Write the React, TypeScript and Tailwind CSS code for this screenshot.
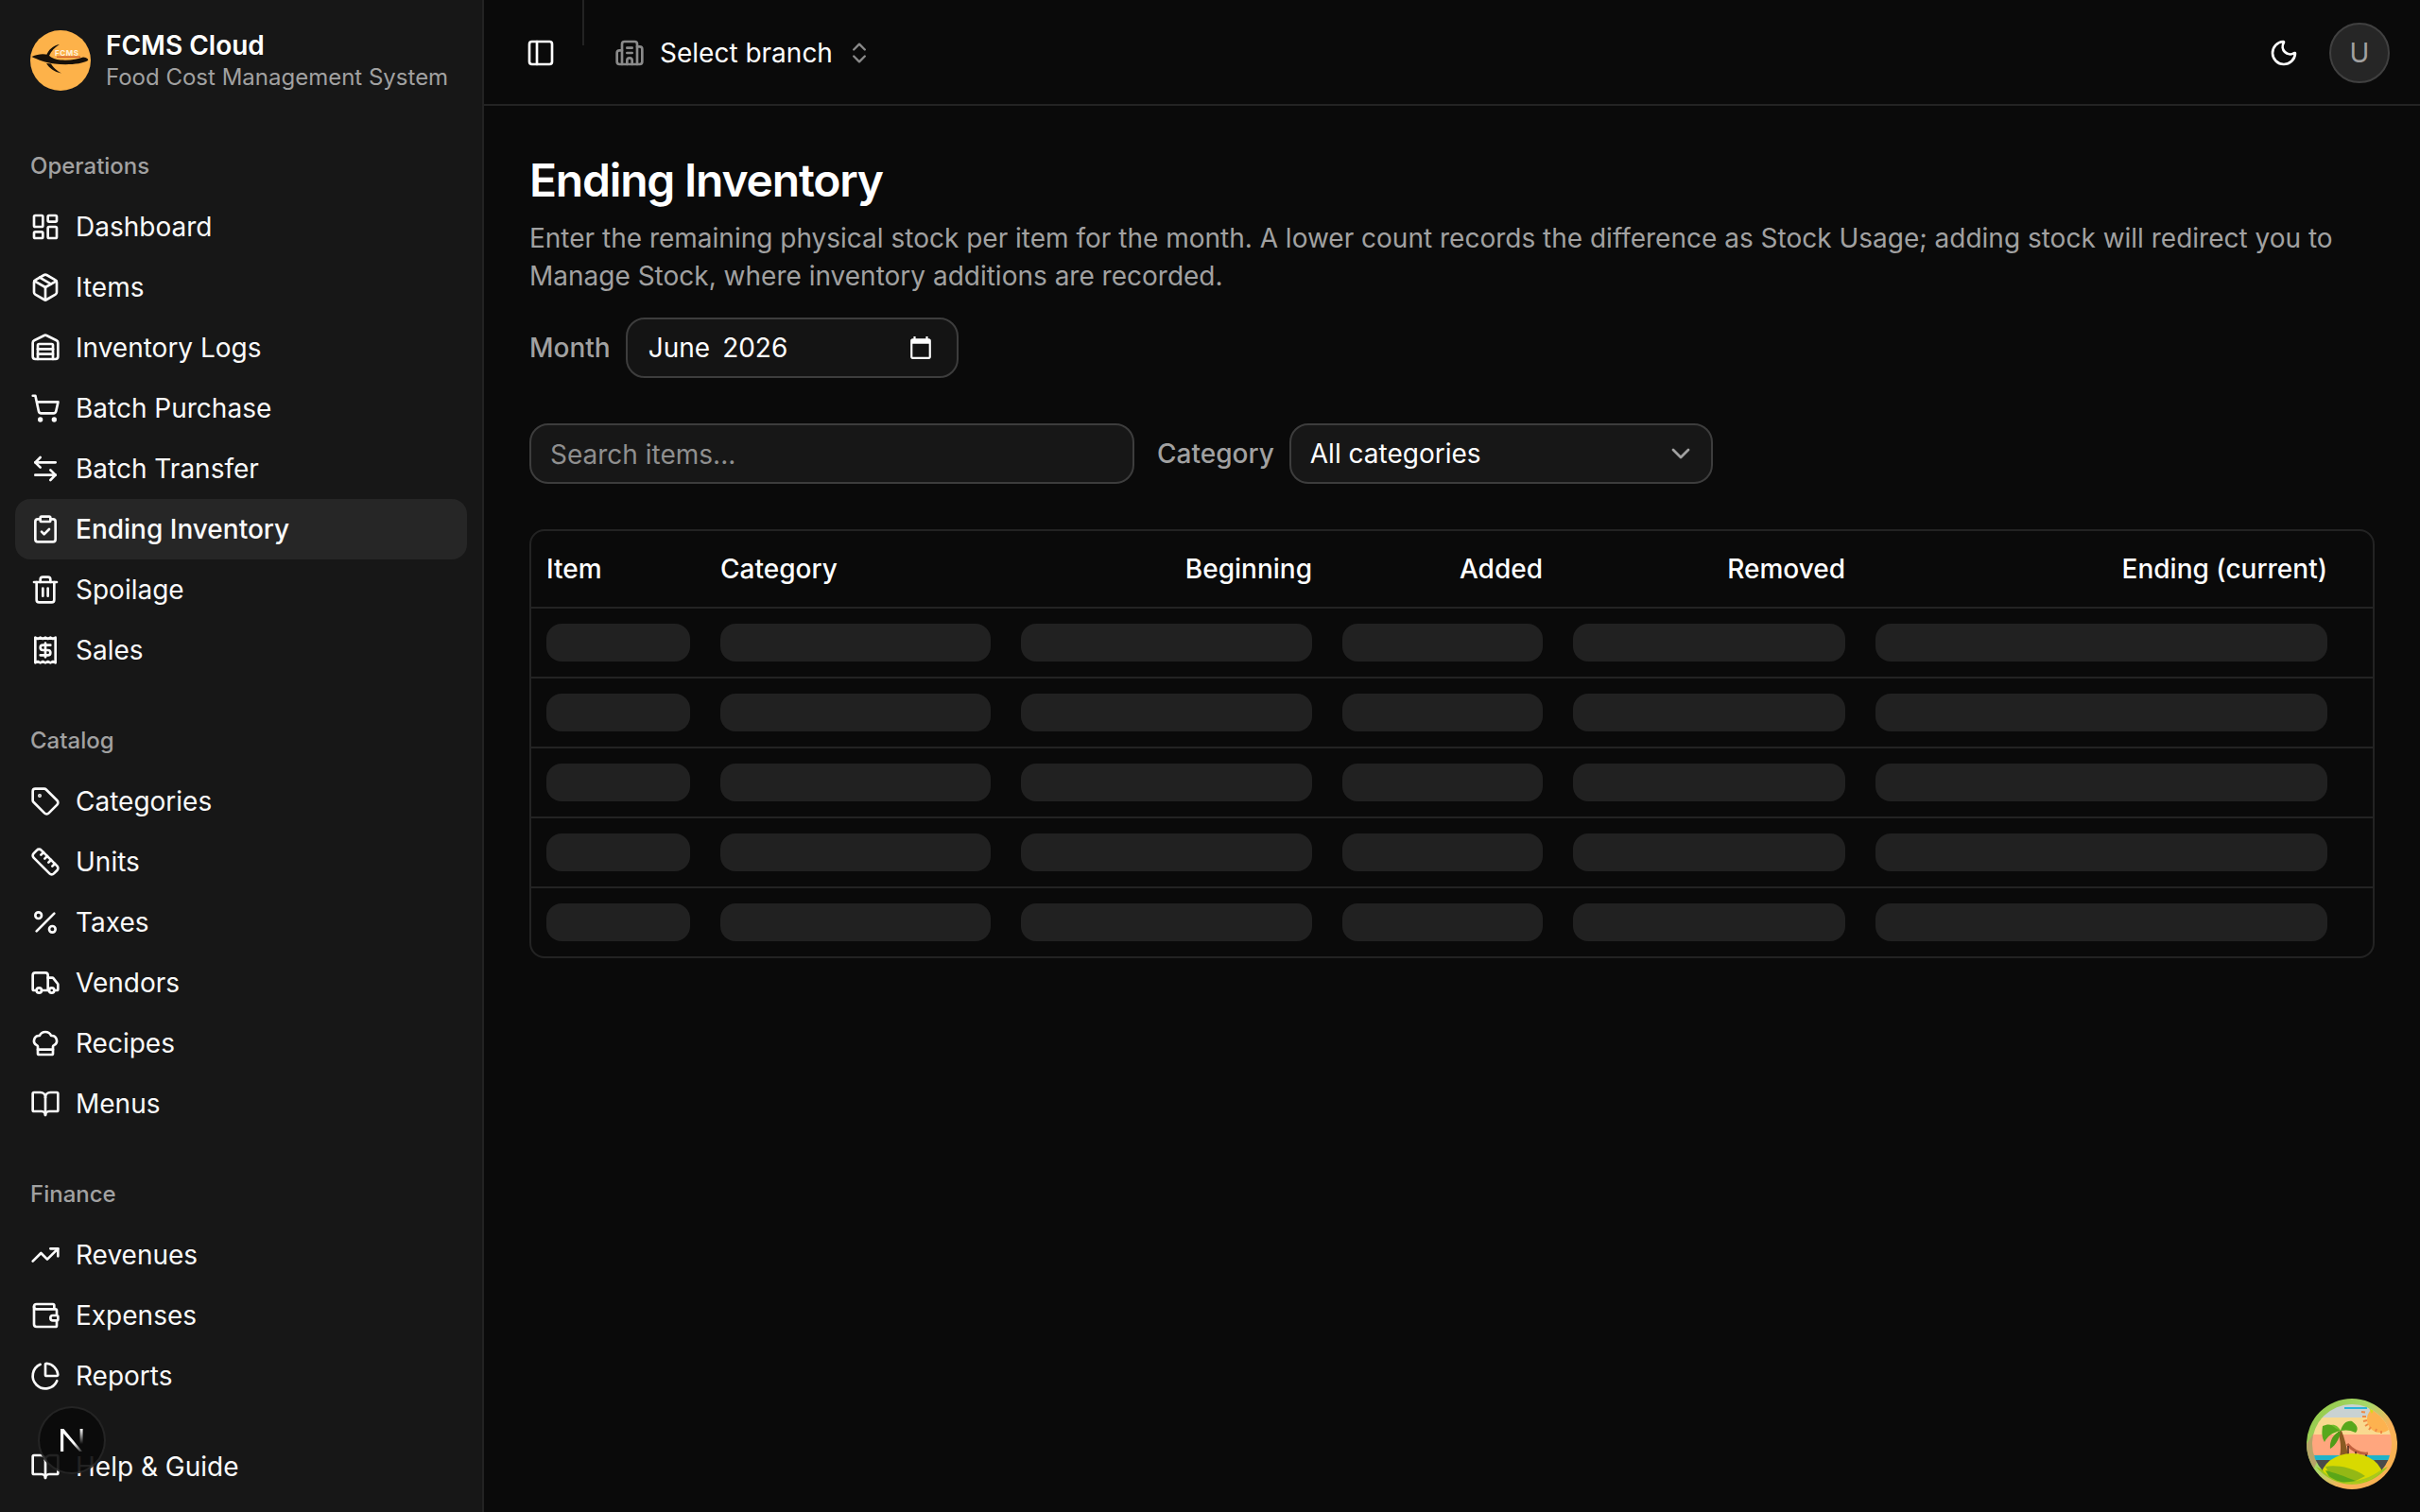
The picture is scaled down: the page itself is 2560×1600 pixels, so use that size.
import {
  ArrowLeftRight,
  BookOpen,
  Building2,
  ChartPie,
  ChefHat,
  ChevronDown,
  ChevronsUpDown,
  ClipboardCheck,
  LayoutDashboard,
  Moon,
  Package,
  PanelLeft,
  Percent,
  Receipt,
  Ruler,
  ShoppingCart,
  Tag,
  Trash2,
  TrendingUp,
  Truck,
  Wallet,
  Warehouse,
} from "lucide-react"

const groups = [
  {
    label: "Operations",
    items: [
      { name: "Dashboard", icon: LayoutDashboard },
      { name: "Items", icon: Package },
      { name: "Inventory Logs", icon: Warehouse },
      { name: "Batch Purchase", icon: ShoppingCart },
      { name: "Batch Transfer", icon: ArrowLeftRight },
      { name: "Ending Inventory", icon: ClipboardCheck, active: true },
      { name: "Spoilage", icon: Trash2 },
      { name: "Sales", icon: Receipt },
    ],
  },
  {
    label: "Catalog",
    items: [
      { name: "Categories", icon: Tag },
      { name: "Units", icon: Ruler },
      { name: "Taxes", icon: Percent },
      { name: "Vendors", icon: Truck },
      { name: "Recipes", icon: ChefHat },
      { name: "Menus", icon: BookOpen },
    ],
  },
  {
    label: "Finance",
    items: [
      { name: "Revenues", icon: TrendingUp },
      { name: "Expenses", icon: Wallet },
      { name: "Reports", icon: ChartPie },
    ],
  },
]

const columns = [
  { title: "Item", width: "w-[184px]", right: false },
  { title: "Category", width: "w-[318px]", right: false },
  { title: "Beginning", width: "w-[340px]", right: true },
  { title: "Added", width: "w-[244px]", right: true },
  { title: "Removed", width: "w-[320px]", right: true },
  { title: "Ending (current)", width: "w-[510px]", right: true },
]

function Logo() {
  return (
    <svg viewBox="0 0 64 64" className="h-16 w-16 shrink-0">
      <circle cx="32" cy="32" r="32" fill="#fdb24a" />
      <path
        d="M1.5 28 C8 25 14 24.5 19 26 C23 30 27 31 32 31.5 C42 32 50 31 56 28.5 C60 29 62 31 61 32 C55 36 38 37 26 35.5 C16 34.5 8 31 1.5 28 Z"
        fill="#17110a"
      />
      <path d="M31 15 C24 16 19 21 17 27 L20 27 C22 22 26 18 31 15 Z" fill="#17110a" />
      <path d="M17 35 C20 40 25 44 33 45.5 C27 42 24 39 22 35.5 Z" fill="#17110a" />
      <text x="26" y="27" fontSize="8" fontWeight="700" letterSpacing="0.6" fill="#fff1dc" fontFamily="Inter, sans-serif">
        FCMS
      </text>
      <rect x="28" y="27.6" width="25" height="1.2" fill="#c9502a" />
    </svg>
  )
}

function NextMark() {
  return (
    <svg viewBox="0 0 24 24" className="h-6 w-6">
      <defs>
        <linearGradient id="nDiag" x1="0" y1="0" x2="1" y2="1">
          <stop offset="0.6" stopColor="#fff" />
          <stop offset="1" stopColor="#fff" stopOpacity="0" />
        </linearGradient>
        <linearGradient id="nStem" x1="0" y1="0" x2="0" y2="1">
          <stop offset="0" stopColor="#fff" />
          <stop offset="0.8" stopColor="#fff" stopOpacity="0" />
        </linearGradient>
      </defs>
      <path d="M0 24V0h3.4L24 25h-3L3.2 5V24z" fill="url(#nDiag)" />
      <rect x="20.6" y="0" width="3" height="20" fill="url(#nStem)" />
    </svg>
  )
}

function Island() {
  return (
    <svg viewBox="0 0 96 96" className="h-full w-full">
      <defs>
        <clipPath id="islandInner">
          <circle cx="48" cy="48" r="42" />
        </clipPath>
        <linearGradient id="islandRing" x1="0" y1="0" x2="1" y2="0.8">
          <stop offset="0" stopColor="#8dc63f" />
          <stop offset="0.45" stopColor="#a8d86a" />
          <stop offset="0.7" stopColor="#fbb25a" />
          <stop offset="1" stopColor="#f6b04e" />
        </linearGradient>
      </defs>
      <circle cx="48" cy="48" r="48" fill="url(#islandRing)" />
      <path d="M0 48 a48 48 0 0 0 8 26 L14 60 L8 36 Z" fill="#b7a468" />
      <path d="M10 72 A48 48 0 0 0 86 72 L48 90 Z" fill="#9ec81f" />
      <g clipPath="url(#islandInner)">
        <rect x="0" y="0" width="96" height="22" fill="#c9d2d2" />
        <rect x="0" y="20" width="96" height="20" fill="#f9d98f" />
        <rect x="0" y="38" width="96" height="24" fill="#ffa67e" />
        <rect x="0" y="60" width="96" height="6" fill="#1fb3c9" />
        <rect x="0" y="65" width="96" height="12" fill="#4a4a4a" />
        <rect x="40" y="9" width="24" height="2" fill="#2bb4d8" />
        <circle cx="78" cy="22" r="14" fill="#fdb24f" />
        <path d="M66 10h6l-3 6z" fill="#d6d91a" />
        <path d="M58 14l4 .6M59 19h4M60 24l4-1M62 29l3-2M66 33l2-3M73 35l1-3M79 37v-3" stroke="#ee8a45" strokeWidth="2" />
        <path d="M35 62 C37 52 36 44 33 35 L37 34 C41 44 43 54 44 61 Z" fill="#8a5a22" />
        <path d="M36 34 C30 27 23 26 17 29 C16 36 16 41 19 46 C22 40 27 36 36 34 Z" fill="#57a81c" />
        <path d="M36 34 C29 37 24 44 25 53 C30 50 35 43 36 34 Z" fill="#4f9c18" />
        <path d="M36 34 C38 27 42 23 48 24 C52 27 56 31 52 36 C46 33 41 33 36 34 Z" fill="#57a81c" />
        <path d="M36 34 C34 30 30 27 26 28 C30 31 33 33 36 34 Z" fill="#6fbe2a" />
        <path d="M43 48 C48 54 56 59 65 58" stroke="#c0603e" strokeWidth="3" fill="none" />
        <path d="M44 50v10M52 56v6M63 59v4" stroke="#46261a" strokeWidth="1.5" />
        <ellipse cx="48" cy="84" rx="33" ry="26" fill="#d8d900" />
        <path d="M20 72 C30 70 48 72 62 82 L50 88 L28 86 Z" fill="#93b815" />
        <path d="M20 76 C28 78 40 82 54 88 L28 90 Z" fill="#5aa618" />
        <path d="M30 88 C50 90 68 84 78 76 L76 96 L30 96 Z" fill="#a8c81c" />
      </g>
    </svg>
  )
}

function Sidebar() {
  return (
    <aside className="flex h-screen w-[512px] shrink-0 flex-col overflow-hidden border-r-2 border-[#232323] bg-[#171717]">
      <div className="flex h-[128px] shrink-0 items-center gap-4 p-8">
        <Logo />
        <div className="min-w-0 whitespace-nowrap">
          <div className="text-[28px] leading-[36px] font-semibold text-white">FCMS Cloud</div>
          <div className="text-[24px] leading-[32px] text-[#a1a1a1]">Food Cost Management System</div>
        </div>
      </div>
      <div className="flex min-h-0 flex-1 flex-col">
        {groups.map((group) => (
          <div key={group.label} className="p-4">
            <div className="flex h-16 items-center px-4 text-[24px] font-medium text-[#a1a1a1]">{group.label}</div>
            {group.items.map((item) => (
              <a
                key={item.name}
                className={`flex h-16 items-center gap-4 rounded-[16px] px-4 text-[28px] text-[#fafafa] ${
                  item.active ? "bg-[#262626] font-medium" : ""
                }`}
              >
                <item.icon className="h-8 w-8 shrink-0" />
                <span>{item.name}</span>
              </a>
            ))}
          </div>
        ))}
        <div className="mt-auto p-4">
          <a className="flex h-16 items-center gap-4 rounded-[16px] px-4 text-[28px] text-[#fafafa]">
            <BookOpen className="h-8 w-8 shrink-0" />
            <span>Help &amp; Guide</span>
          </a>
        </div>
      </div>
    </aside>
  )
}

function Topbar() {
  return (
    <header className="flex h-[112px] shrink-0 items-center border-b-2 border-white/10 px-8 pt-[2px]">
      <button className="flex h-14 w-14 items-center justify-center text-white">
        <PanelLeft className="h-8 w-8" />
      </button>
      <div className="-mt-[2px] ml-4 h-12 w-[2px] self-start bg-white/10" />
      <button className="ml-8 flex items-center gap-4 text-[28px] text-white">
        <Building2 className="h-8 w-8 text-[#8a8a8a]" />
        <span>Select branch</span>
        <ChevronsUpDown className="-ml-[2px] h-7 w-7 text-[#8a8a8a]" />
      </button>
      <div className="ml-auto flex items-center gap-4">
        <button className="flex h-16 w-16 items-center justify-center text-white">
          <Moon className="h-8 w-8" />
        </button>
        <div className="flex h-16 w-16 items-center justify-center rounded-full border-2 border-[#404040] bg-[#262626] text-[28px] text-[#a1a1a1]">
          U
        </div>
      </div>
    </header>
  )
}

function SkeletonTable() {
  return (
    <div className="mt-12 overflow-hidden rounded-[16px] border-2 border-white/10">
      <table className="w-full table-fixed border-separate border-spacing-0 text-[28px]">
        <colgroup>
          {columns.map((col) => (
            <col key={col.title} className={col.width} />
          ))}
          <col />
        </colgroup>
        <thead>
          <tr>
            {columns.map((col) => (
              <th
                key={col.title}
                className={`h-[82px] border-b-2 border-white/10 px-4 font-medium text-white ${
                  col.right ? "text-right" : "text-left"
                }`}
              >
                {col.title}
              </th>
            ))}
            <th className="border-b-2 border-white/10" />
          </tr>
        </thead>
        <tbody>
          {[0, 1, 2, 3, 4].map((row) => (
            <tr key={row}>
              {columns.map((col) => (
                <td key={col.title} className={`p-4 ${row < 4 ? "border-b-2 border-white/10" : ""}`}>
                  <div className="h-10 rounded-[16px] bg-[#212121]" />
                </td>
              ))}
              <td className={row < 4 ? "border-b-2 border-white/10" : ""} />
            </tr>
          ))}
        </tbody>
      </table>
    </div>
  )
}

export default function App() {
  return (
    <div className="relative flex h-screen w-full overflow-hidden bg-[#0a0a0a] font-[family-name:Inter,sans-serif] text-white">
      <Sidebar />
      <main className="flex min-w-0 flex-1 flex-col">
        <Topbar />
        <div className="flex-1 p-12">
          <h1 className="text-[48px] leading-[62px] font-semibold tracking-[-1.2px]">Ending Inventory</h1>
          <p className="mt-[10px] text-[28px] leading-[40px] text-[#a1a1a1]">
            Enter the remaining physical stock per item for the month. A lower count records the difference as Stock
            Usage; adding stock will redirect you to Manage Stock, where inventory additions are recorded.
          </p>
          <div className="mt-6 flex items-center gap-4">
            <label className="text-[28px] font-medium text-[#a1a1a1]">Month</label>
            <div className="flex h-16 w-[352px] items-center gap-[13px] rounded-[20px] border-2 border-[#3d3d3d] bg-[#141414] pr-[25px] pl-[22px] text-[28px] text-white">
              <span>June</span>
              <span>2026</span>
              <svg viewBox="0 0 24 24" className="ml-auto h-[26px] w-[26px]" fill="currentColor">
                <path d="M20 3h-1V1h-2v2H7V1H5v2H4c-1.1 0-2 .9-2 2v16c0 1.1.9 2 2 2h16c1.1 0 2-.9 2-2V5c0-1.1-.9-2-2-2zm0 18H4V8h16v13z" />
              </svg>
            </div>
          </div>
          <div className="mt-12 flex items-center gap-6">
            <input
              placeholder="Search items..."
              className="h-16 w-[640px] rounded-[20px] border-2 border-[#3d3d3d] bg-[#171717] px-[20px] pt-[2px] text-[28px] text-white placeholder:text-[#8f8f8f]"
            />
            <div className="flex items-center gap-4">
              <span className="text-[28px] font-medium text-[#a1a1a1]">Category</span>
              <button className="flex h-16 w-[448px] items-center justify-between rounded-[20px] border-2 border-[#3d3d3d] bg-[#171717] pr-[16px] pl-[20px] text-[28px] text-white">
                <span>All categories</span>
                <ChevronDown className="h-8 w-8 text-[#a1a1a1]" />
              </button>
            </div>
          </div>
          <SkeletonTable />
        </div>
      </main>
      <button className="absolute bottom-[40px] left-[40px] flex h-[72px] w-[72px] items-center justify-center rounded-full border-2 border-white/10 bg-[#0a0a0a]/90">
        <NextMark />
      </button>
      <div className="absolute right-6 bottom-6 h-24 w-24">
        <Island />
      </div>
    </div>
  )
}
